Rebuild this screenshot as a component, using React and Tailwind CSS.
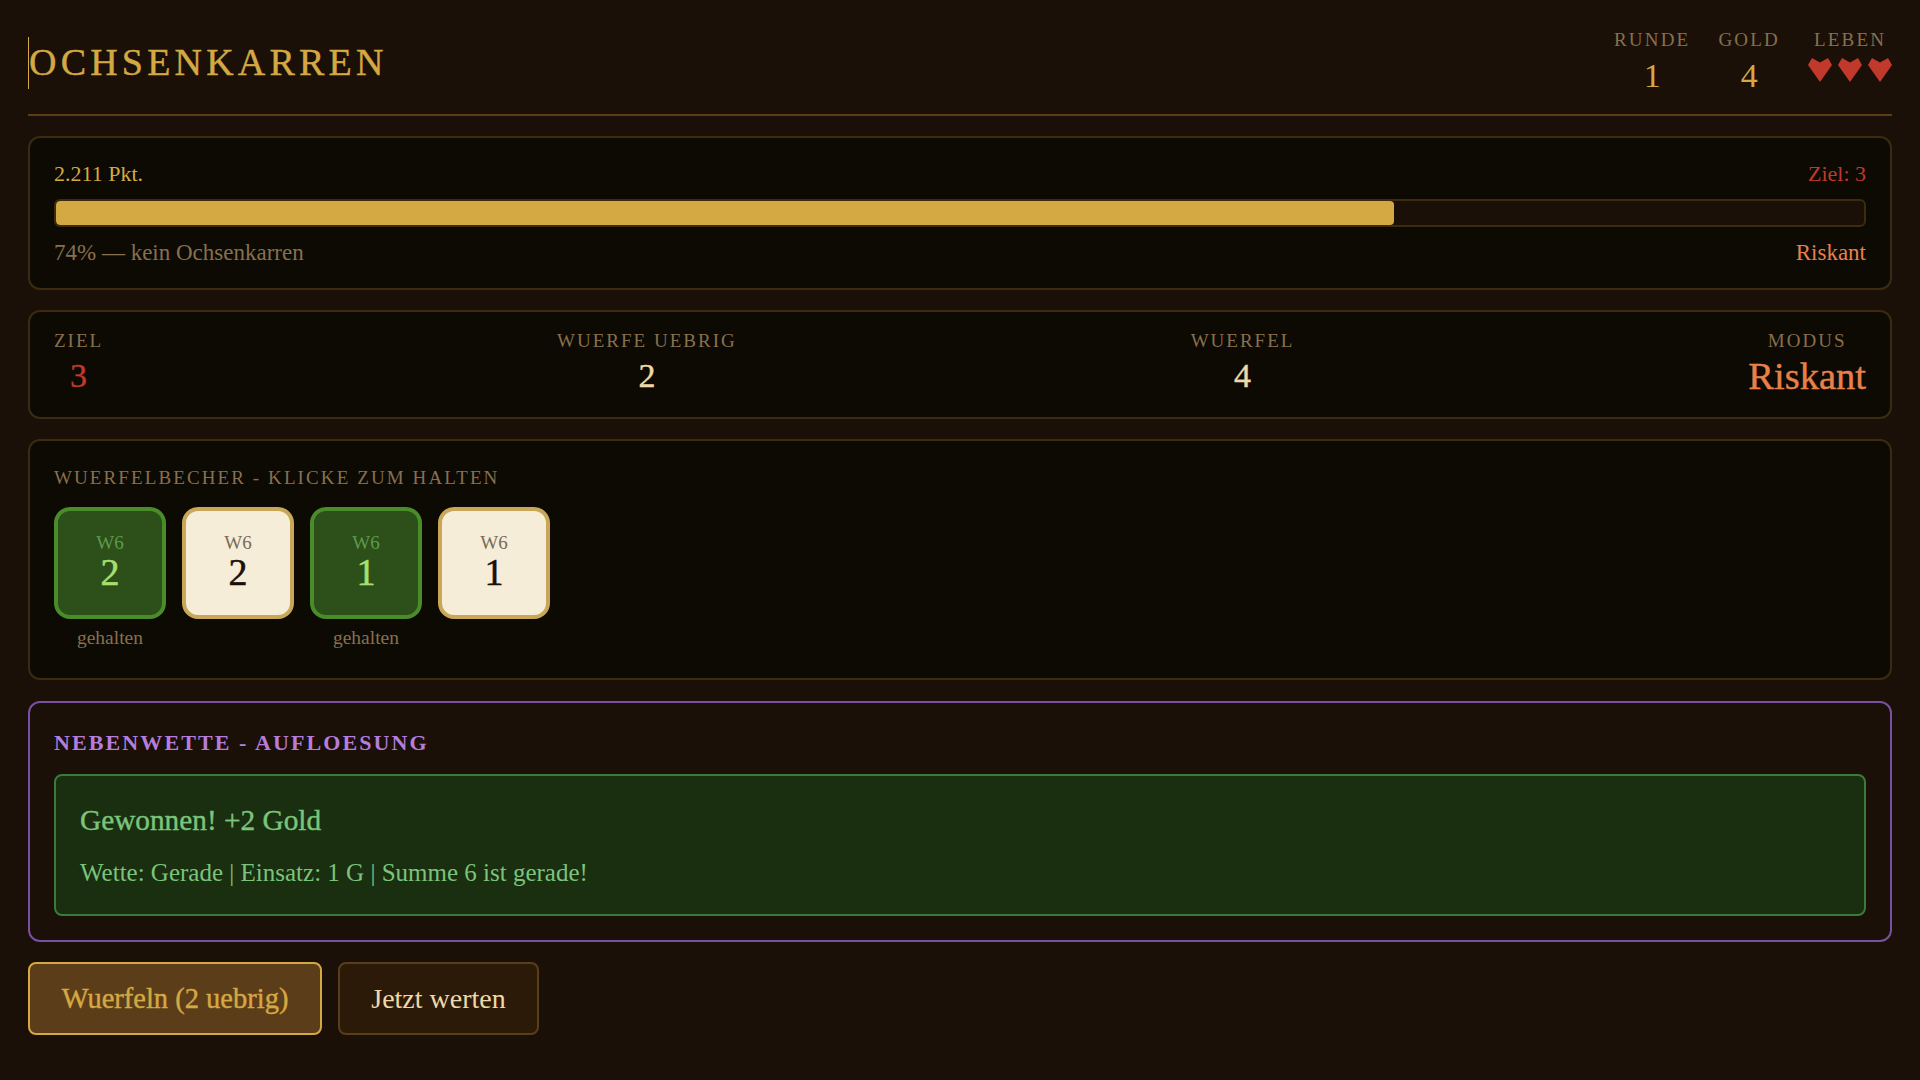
const SERIF = "font-['Liberation_Serif',serif]"

const dice = [
  { value: 2, held: true },
  { value: 2, held: false },
  { value: 1, held: true },
  { value: 1, held: false },
]

function Heart() {
  return (
    <svg width="24" height="24" viewBox="0 0 24 24" className="block">
      <polygon fill="#c0392b" points="4,0 12,4.5 20,0 24,7 12,24 0,7" />
    </svg>
  )
}

function Die({ value, held }) {
  return (
    <div className="flex flex-col items-center w-[112px]">
      <div
        className={`w-[112px] h-[112px] rounded-[16px] border-[4px] flex flex-col items-center justify-center ${
          held ? 'bg-[#2d4f1a] border-[#4a8c2a]' : 'bg-[#f5edd8] border-[#c8a858]'
        }`}
      >
        <span className={`text-[19px] leading-[18px] ${held ? 'text-[#5c9a4a]' : 'text-[#7a6a55]'}`}>W6</span>
        <span className={`text-[38px] leading-[40px] [-webkit-text-stroke:0.5px] ${held ? 'text-[#a8e070]' : 'text-[#1a1008]'}`}>{value}</span>
      </div>
      <div className="h-[18px] mt-[10px] text-[19.5px] leading-[18px] text-[#87704e]">{held ? 'gehalten' : ''}</div>
    </div>
  )
}

function Stat({ label, value, color, size = 'text-[34px]' }) {
  return (
    <div className="text-center">
      <div className="text-[19px] leading-[22px] tracking-[2px] text-[#87704e]">{label}</div>
      <div className={`${size} leading-[42px] mt-[3px] [-webkit-text-stroke:0.4px] ${color}`}>{value}</div>
    </div>
  )
}

function HeaderStat({ label, value }) {
  return (
    <div className="text-center">
      <div className="text-[19px] leading-[22px] tracking-[2.2px] text-[#87704e]">{label}</div>
      <div className="text-[34px] leading-[42px] mt-[4px] text-[#d4a843]">{value}</div>
    </div>
  )
}

export default function App() {
  return (
    <div className={`min-h-screen bg-[#1a1008] px-[28px] pt-[28px] ${SERIF}`}>
      {/* Header */}
      <header className="flex justify-between items-start h-[88px] border-b-2 border-[#5c3d1a]">
        <h1 className="mt-[9px] h-[52px] border-l border-[#d4a843] text-[38px] leading-[50px] tracking-[4.2px] text-[#d4a843] [-webkit-text-stroke:0.4px]">
          OCHSENKARREN
        </h1>
        <div className="flex gap-[28px] pt-[1px]">
          <HeaderStat label="RUNDE" value="1" />
          <HeaderStat label="GOLD" value="4" />
          <div className="text-center">
            <div className="text-[19px] leading-[22px] tracking-[2.2px] text-[#87704e]">LEBEN</div>
            <div className="flex gap-[6px] mt-[7px]">
              <Heart />
              <Heart />
              <Heart />
            </div>
          </div>
        </div>
      </header>

      {/* Progress */}
      <section className="mt-[20px] h-[154px] rounded-[12px] border-2 border-[#3d2b10] bg-[#0d0a04] px-[24px] pt-[22px]">
        <div className="flex justify-between text-[22px] leading-[28px]">
          <span className="text-[#d4a843]">2.211 Pkt.</span>
          <span className="text-[#c0392b]">Ziel: 3</span>
        </div>
        <div className="mt-[11px] h-[28px] rounded-[6px] border-2 border-[#3d2b10] bg-[#1a1008] overflow-hidden">
          <div className="h-full w-[74%] rounded-[4px] bg-[#d4a843]" />
        </div>
        <div className="mt-[12px] flex justify-between text-[23px] leading-[28px]">
          <span className="text-[#87704e]">74% — kein Ochsenkarren</span>
          <span className="text-[#e8804a]">Riskant</span>
        </div>
      </section>

      {/* Stats */}
      <section className="mt-[20px] h-[109px] rounded-[12px] border-2 border-[#3d2b10] bg-[#0d0a04] px-[24px] pt-[18px] flex justify-between">
        <Stat label="ZIEL" value="3" color="text-[#c0392b]" />
        <Stat label="WUERFE UEBRIG" value="2" color="text-[#f0d9a8]" />
        <Stat label="WUERFEL" value="4" color="text-[#f0d9a8]" />
        <Stat label="MODUS" value="Riskant" color="text-[#e8804a]" size="text-[38.5px]" />
      </section>

      {/* Dice */}
      <section className="mt-[20px] h-[241px] rounded-[12px] border-2 border-[#3d2b10] bg-[#0d0a04] px-[24px] pt-[26px]">
        <div className="text-[19px] leading-[22px] tracking-[2.1px] text-[#87704e]">WUERFELBECHER - KLICKE ZUM HALTEN</div>
        <div className="mt-[18px] flex gap-[16px]">
          {dice.map((d, i) => (
            <Die key={i} value={d.value} held={d.held} />
          ))}
        </div>
      </section>

      {/* Side bet */}
      <section className="mt-[21px] h-[241px] rounded-[12px] border-2 border-[#7b4fa0] bg-[#1a1008] px-[24px] pt-[28px]">
        <div className="text-[22px] leading-[24px] font-bold tracking-[2.1px] text-[#b57edc]">NEBENWETTE - AUFLOESUNG</div>
        <div className="mt-[19px] h-[142px] rounded-[8px] border-2 border-[#3a7a3a] bg-[#1a2e10] px-[24px] pt-[28px]">
          <div className="text-[29.3px] leading-[32px] text-[#7bc47b] [-webkit-text-stroke:0.4px]">Gewonnen! +2 Gold</div>
          <div className="mt-[22px] text-[25px] leading-[30px] text-[#7bc47b]">Wette: Gerade | Einsatz: 1 G | Summe 6 ist gerade!</div>
        </div>
      </section>

      {/* Actions */}
      <div className="mt-[20px] flex gap-[16px]">
        <button className="h-[73px] w-[294px] pt-[1px] rounded-[8px] border-2 border-[#d4a843] bg-[#5c3d1a] text-[28.5px] text-[#d4a843] [-webkit-text-stroke:0.4px]">
          Wuerfeln (2 uebrig)
        </button>
        <button className="h-[73px] w-[201px] rounded-[8px] border-2 border-[#5c3d1a] bg-[#2c1a08] text-[28px] text-[#f0d9a8]">
          Jetzt werten
        </button>
      </div>
    </div>
  )
}
